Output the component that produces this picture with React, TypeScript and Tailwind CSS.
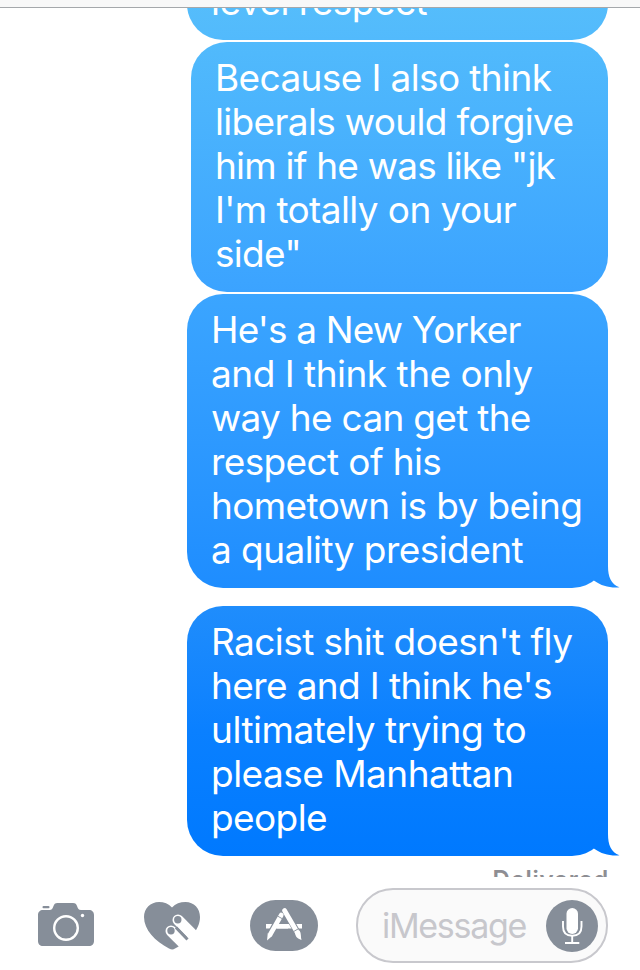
import React from 'react'
import clsx from 'clsx'

type Line = { text: string; tracking: string }

type Message = {
  id: number
  lines: Line[]
  size: string
  fill: string
  tail?: [string, string]
}

const messages: Message[] = [
  {
    id: 1,
    size: 'w-[421px] h-[100px] mt-[-60px] pt-[40px]',
    fill: 'from-[#5bc2fa] to-[#52bafc]',
    lines: [{ text: 'level respect', tracking: 'tracking-[-0.5px]' }],
  },
  {
    id: 2,
    size: 'w-[417px] h-[250px] mt-[2px] pt-[14px]',
    fill: 'from-[#51bafc] to-[#3ba3ff]',
    lines: [
      { text: 'Because I also think', tracking: 'tracking-[-0.62px]' },
      { text: 'liberals would forgive', tracking: 'tracking-[-0.66px]' },
      { text: 'him if he was like "jk', tracking: 'tracking-[-0.79px]' },
      { text: "I'm totally on your", tracking: 'tracking-[-0.61px]' },
      { text: 'side"', tracking: 'tracking-[-0.7px]' },
    ],
  },
  {
    id: 3,
    size: 'w-[421px] h-[294px] mt-[2px] pt-[14px]',
    fill: 'from-[#3ba5ff] to-[#1e8dff]',
    tail: ['#2290ff', '#1e8dff'],
    lines: [
      { text: "He's a New Yorker", tracking: 'tracking-[-0.86px]' },
      { text: 'and I think the only', tracking: 'tracking-[-0.5px]' },
      { text: 'way he can get the', tracking: 'tracking-[-0.71px]' },
      { text: 'respect of his', tracking: 'tracking-[-0.62px]' },
      { text: 'hometown is by being', tracking: 'tracking-[-0.62px]' },
      { text: 'a quality president', tracking: 'tracking-[-0.56px]' },
    ],
  },
  {
    id: 4,
    size: 'w-[421px] h-[250px] mt-[18px] pt-[14px]',
    fill: 'from-[#1f8dfc] via-[#0a80ff] to-[#0079ff]',
    tail: ['#037bff', '#0079ff'],
    lines: [
      { text: "Racist shit doesn't fly", tracking: 'tracking-[-0.57px]' },
      { text: "here and I think he's", tracking: 'tracking-[-0.62px]' },
      { text: 'ultimately trying to', tracking: 'tracking-[-0.47px]' },
      { text: 'please Manhattan', tracking: 'tracking-[-0.52px]' },
      { text: 'people', tracking: 'tracking-[-0.6px]' },
    ],
  },
]

function Tail({ id, colors }: { id: string; colors: [string, string] }) {
  return (
    <svg className="absolute -right-[12px] bottom-0" width="30" height="38" viewBox="0 0 30 38">
      <defs>
        <linearGradient id={id} x1="0" y1="0" x2="0" y2="1">
          <stop offset="0" stopColor={colors[0]} />
          <stop offset="1" stopColor={colors[1]} />
        </linearGradient>
      </defs>
      <path d="M8 0H18V16C18 27 21 34 29.500 37.300C20 38.200 11 35.500 5 31.200L0 28Z" fill={`url(#${id})`} />
    </svg>
  )
}

function Bubble({ message }: { message: Message }) {
  return (
    <div
      className={clsx(
        'relative shrink-0 rounded-[36px] bg-linear-to-b pl-[24px] text-[37px] leading-[44px] text-white',
        message.size,
        message.fill
      )}
    >
      {message.lines.map((line) => (
        <p key={line.text} className="whitespace-nowrap">
          <span className={line.tracking}>{line.text}</span>
        </p>
      ))}
      {message.tail && <Tail id={`tail-${message.id}`} colors={message.tail} />}
    </div>
  )
}

function CameraIcon() {
  return (
    <svg width="56" height="44" viewBox="0 0 56 44" fill="#868e99">
      <rect x="4.500" y="3" width="7" height="2.200" rx="1" />
      <path d="M5 7H11.500C14 7 14.500 5.500 15.500 3C16.300 1 17 0 19.500 0H35C37.500 0 38.300 1 39 3C40 5.500 40.500 7 43 7H51C54 7 56 9 56 12V38C56 41 54 43 51 43H5C2 43 0 41 0 38V12C0 9 2 7 5 7Z" />
      <circle cx="28" cy="25" r="11.800" fill="none" stroke="#fff" strokeWidth="2.400" />
      <circle cx="44.500" cy="12.500" r="1.700" fill="#fff" />
    </svg>
  )
}

function HeartIcon() {
  return (
    <svg width="56" height="48" viewBox="0 0 56 48">
      <path
        d="M28 5.500C24.500 1.800 20 0 15 0C6.500 0 0 6.500 0 15C0 28 11 39 25 46.500C27.500 47.800 29 48 31 46.500C44 40 56 28 56 15C56 6.500 50 0 41.500 0C36 0 31.500 1.800 28 5.500Z"
        fill="#868e99"
      />
      {/* two fingers resting on the heart */}
      <path d="M27 29L46 48" stroke="#fff" strokeWidth="11" strokeLinecap="round" />
      <path d="M34 18L56 40" stroke="#fff" strokeWidth="11" strokeLinecap="round" />
      <path d="M40 34L56 40V48H36Z" fill="#fff" />
      <path d="M32 25.500L43.500 37.500" stroke="#868e99" strokeWidth="3" />
      <circle cx="27" cy="28.800" r="3.700" fill="#868e99" />
      <circle cx="33.800" cy="17.800" r="3.700" fill="#868e99" />
    </svg>
  )
}

function AppStoreIcon() {
  return (
    <svg width="68" height="52" viewBox="0 0 68 52">
      <rect width="68" height="51" rx="25.500" fill="#868e99" />
      <path d="M16 24H52V28.500H16Z" fill="#fff" />
      <path d="M31 14.500L20.500 33.500" stroke="#868e99" strokeWidth="6.500" />
      <path d="M35 10.500L48 33.500" stroke="#868e99" strokeWidth="6.500" />
      <path d="M27.500 24H38V28.500H25Z" fill="#fff" />
      <path d="M31.300 15L20.500 34" stroke="#fff" strokeWidth="4.600" strokeLinecap="round" />
      <path d="M17.800 33L22.500 35.700L17 40.500Z" fill="#fff" />
      <path d="M34.500 10.500L47 32" stroke="#fff" strokeWidth="4.800" strokeLinecap="round" />
      <path d="M45 33L49.500 30.500C51.500 33.500 50.500 37 51.500 40C48.500 39 45.500 37.500 45 33Z" fill="#fff" />
      <path d="M27.800 16.200L32 18.600M43.700 31.500L48.300 28.800" stroke="#868e99" strokeWidth="0.900" />
    </svg>
  )
}

function MicIcon() {
  return (
    <svg width="52" height="52" viewBox="0 0 52 52">
      <circle cx="26" cy="26" r="26" fill="#868e99" />
      <rect x="20.500" y="8" width="11.500" height="26" rx="5.750" fill="#fff" />
      <path d="M17 21V26.500C17 32.500 20.500 35.800 26.200 35.800S35.500 32.500 35.500 26.500V21" fill="none" stroke="#fff" strokeWidth="1.900" />
      <path d="M26.200 36V43M19 43H33.300" stroke="#fff" strokeWidth="1.900" />
    </svg>
  )
}

export default function App() {
  return (
    <div className="flex h-[970px] w-[640px] flex-col overflow-hidden bg-white font-['Inter','Liberation_Sans',sans-serif]">
      <header className="h-[8px] shrink-0 border-b border-[#a5a8ab] bg-[#f8f8f8]" />

      <main className="flex h-[869px] shrink-0 flex-col overflow-hidden">
        <div className="-mt-[8px] flex h-[877px] shrink-0 flex-col items-end overflow-visible pr-[32px]">
          {messages.map((message) => (
            <Bubble key={message.id} message={message} />
          ))}
          <p className="mt-[10px] text-[24px] leading-[28px] font-semibold tracking-[0.7px] text-[#8e8e93]">
            <span className="-mr-px">Delivered</span>
          </p>
        </div>
      </main>

      <footer className="flex h-[93px] shrink-0 items-start bg-white pt-[11px] pl-[38px]">
        <button type="button" className="mt-[15px]">
          <CameraIcon />
        </button>
        <button type="button" className="mt-[14px] ml-[50px]">
          <HeartIcon />
        </button>
        <button type="button" className="mt-[12px] ml-[50px]">
          <AppStoreIcon />
        </button>
        <div className="ml-[38px] flex h-[75px] w-[252px] items-center justify-between rounded-[37px] border-2 border-[#c8c8cd] bg-[#fafafa] pr-[8px] pl-[24px]">
          <span className="text-[34px] leading-[44px] tracking-[-1.3px] text-[#c7c7cc]">iMessage</span>
          <MicIcon />
        </div>
      </footer>
    </div>
  )
}
